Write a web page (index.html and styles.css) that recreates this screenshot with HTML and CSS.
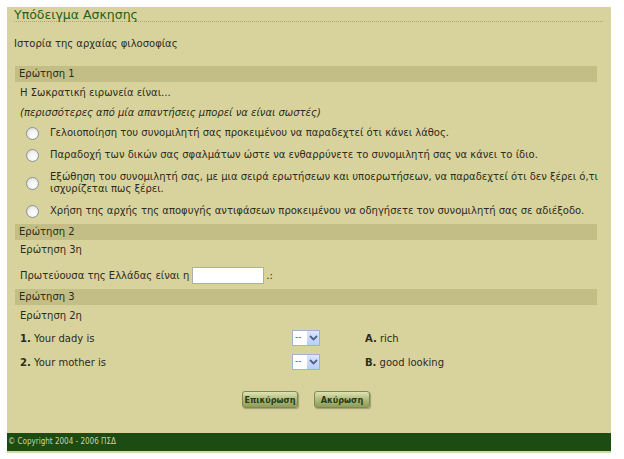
FILE: index.html
```html
<!DOCTYPE html>
<html lang="el">
<head>
<meta charset="utf-8">
<title>Υπόδειγμα Ασκησης</title>
<link rel="stylesheet" href="styles.css">
</head>
<body>
<div class="panel">
  <div class="title">Υπόδειγμα Ασκησης</div>
  <div class="subject">Ιστορία της αρχαίας φιλοσοφίας</div>

  <div class="qbar">Ερώτηση 1</div>
  <div class="qtext">Η Σωκρατική ειρωνεία είναι...</div>
  <div class="hint">(περισσότερες από μία απαντήσεις μπορεί να είναι σωστές)</div>
  <ul class="options">
    <li><input type="radio" name="q1" class="radio"><span>Γελοιοποίηση του συνομιλητή σας προκειμένου να παραδεχτεί ότι κάνει λάθος.</span></li>
    <li><input type="radio" name="q1" class="radio"><span>Παραδοχή των δικών σας σφαλμάτων ώστε να ενθαρρύνετε το συνομιλητή σας να κάνει το ίδιο.</span></li>
    <li><input type="radio" name="q1" class="radio"><span>Εξώθηση του συνομιλητή σας, με μια σειρά ερωτήσεων και υποερωτήσεων, να παραδεχτεί ότι δεν ξέρει ό,τι<br>ισχυρίζεται πως ξέρει.</span></li>
    <li><input type="radio" name="q1" class="radio"><span>Χρήση της αρχής της αποφυγής αντιφάσεων προκειμένου να οδηγήσετε τον συνομιλητή σας σε αδιέξοδο.</span></li>
  </ul>

  <div class="qbar q2">Ερώτηση 2</div>
  <div class="qtext q2t">Ερώτηση 3η</div>
  <div class="fill">Πρωτεύουσα της Ελλάδας είναι η <input type="text" class="textbox"> .:</div>

  <div class="qbar q3">Ερώτηση 3</div>
  <div class="qtext q3t">Ερώτηση 2η</div>
  <div class="match">
    <div class="mrow">
      <div class="mleft"><b>1.</b> Your dady is</div>
      <div class="select"><span class="val">--</span><span class="arrow"><svg width="9" height="6" viewBox="0 0 9 6"><path d="M1 1 L4.5 4.5 L8 1" fill="none" stroke="#4d6185" stroke-width="1.8"/></svg></span></div>
      <div class="mright"><b>A.</b> rich</div>
    </div>
    <div class="mrow">
      <div class="mleft"><b>2.</b> Your mother is</div>
      <div class="select"><span class="val">--</span><span class="arrow"><svg width="9" height="6" viewBox="0 0 9 6"><path d="M1 1 L4.5 4.5 L8 1" fill="none" stroke="#4d6185" stroke-width="1.8"/></svg></span></div>
      <div class="mright"><b>B.</b> good looking</div>
    </div>
  </div>

  <div class="buttons">
    <button class="btn">Επικύρωση</button>
    <button class="btn">Ακύρωση</button>
  </div>

  <div class="footer">© Copyright 2004 - 2006 ΠΣΔ</div>
</div>
</body>
</html>
```

FILE: styles.css
```css
html, body {
  margin: 0;
  padding: 0;
  background: #ffffff;
}

body {
  font-family: "DejaVu Sans", sans-serif;
  font-size: 10px;
  color: #2b2b20;
}

.panel {
  margin: 7px 0 0 7px;
  width: 604px;
  background: #d8d39d;
}

.title {
  margin: 0 8px 0 7px;
  padding-top: 1px;
  line-height: 13px;
  font-size: 12.5px;
  color: #276016;
  border-bottom: 1px dotted #a5a679;
}

.subject {
  margin: 15px 0 0 7px;
  line-height: 14px;
}

.qbar {
  margin: 15px 14px 0 8px;
  padding-left: 4px;
  height: 16px;
  line-height: 16px;
  background: #c3be85;
}

.qtext {
  margin: 4px 0 0 13px;
  line-height: 14px;
}

.hint {
  margin: 6px 0 0 13px;
  line-height: 14px;
  font-style: italic;
}

.options {
  list-style: none;
  margin: 7px 0 0 0;
  padding: 0 14px 0 19px;
  display: flex;
  flex-direction: column;
  gap: 10px;
}

.options li {
  display: flex;
  align-items: center;
  line-height: 12px;
  white-space: nowrap;
}

.radio {
  appearance: none;
  -webkit-appearance: none;
  margin: -1px 11px -1px 0;
  flex: none;
  width: 13px;
  height: 13px;
  border-radius: 50%;
  border: 1px solid #8593a3;
  background: radial-gradient(circle at 60% 65%, #ffffff 0%, #f2f2ee 45%, #d4d4cc 100%);
  box-sizing: border-box;
}

.qbar.q2 {
  margin-top: 7px;
}

.qtext.q2t {
  margin-top: 3px;
}

.fill {
  margin: 10px 0 0 13px;
  display: flex;
  align-items: center;
  line-height: 17px;
}

.textbox {
  margin: 0 2px 0 3px;
  width: 72px;
  height: 17px;
  box-sizing: border-box;
  border: 1px solid #a8aeb3;
  background: #ffffff;
  padding: 0;
}

.qbar.q3 {
  margin-top: 5px;
}

.qtext.q3t {
  margin-top: 4px;
}

.match {
  margin: 7px 0 0 13px;
  display: flex;
  flex-direction: column;
  gap: 8px;
}

.mrow {
  display: grid;
  grid-template-columns: 272px 73px 1fr;
  align-items: center;
  height: 16px;
}

.select {
  display: flex;
  width: 28px;
  height: 16px;
  box-sizing: border-box;
  border: 1px solid #9fb4cf;
  background: #ffffff;
}

.select .val {
  flex: 1;
  padding-left: 2px;
  line-height: 13px;
  font-size: 9px;
  color: #555555;
}

.select .arrow {
  width: 12px;
  display: flex;
  align-items: center;
  justify-content: center;
  background: linear-gradient(#dbe6fd, #b9cdf6);
}

.buttons {
  margin: 21px 14px 0 8px;
  display: flex;
  justify-content: center;
  gap: 16px;
  padding-bottom: 25px;
}

.btn {
  width: 56px;
  height: 17px;
  padding: 0;
  border: 1px solid #7d8a52;
  border-radius: 3px;
  background: linear-gradient(#dfe3b4 0%, #b4bd82 45%, #8e9c5c 100%);
  box-shadow: 1px 1px 1px rgba(90, 90, 50, 0.45);
  font-family: "DejaVu Sans Condensed", "DejaVu Sans", sans-serif;
  font-size: 9px;
  font-weight: bold;
  color: #233f10;
}

.footer {
  height: 18px;
  line-height: 18px;
  padding-left: 1px;
  background: #1c4c12;
  color: #cfd2a4;
  font-family: "DejaVu Sans Condensed", "DejaVu Sans", sans-serif;
  font-size: 8px;
  border-bottom: 2px solid #d3dca3;
}
```
